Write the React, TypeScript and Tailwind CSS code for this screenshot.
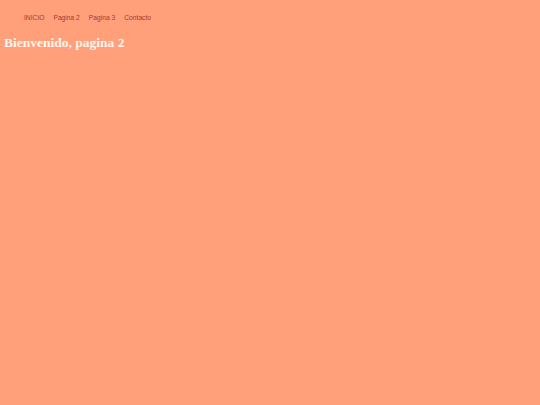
export default function App() {
  const links = ['INICIO', 'Pagina 2', 'Pagina 3', 'Contacto']
  return (
    <div className="min-h-[405px] bg-[#ffa07a] pt-[13px] pl-1 font-['Liberation_Serif',serif]">
      <ul className="flex gap-[9px] pl-5 font-['Liberation_Sans',Arial,sans-serif] text-[6.7px] leading-[9px] text-[#a8382e]">
        {links.map((l) => (
          <li key={l}>
            <a href="#">{l}</a>
          </li>
        ))}
      </ul>
      <h1 className="mt-[13px] text-[13.5px] font-bold leading-[16px] text-[#fff6ee]">Bienvenido, pagina 2</h1>
    </div>
  )
}
